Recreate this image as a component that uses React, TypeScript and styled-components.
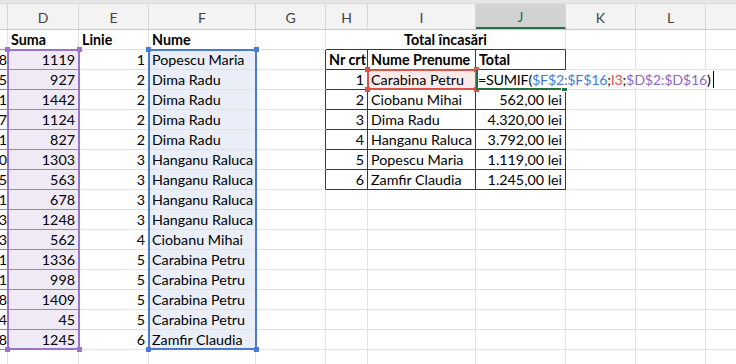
import styled, { createGlobalStyle } from "styled-components";

const GlobalStyle = createGlobalStyle`
  body {
    margin: 0;
    background: #ffffff;
    font-family: "Lato", "Liberation Sans", sans-serif;
  }
`;

interface Col {
  name: string;
  width: number;
}

const columns: Col[] = [
  { name: "", width: 8 },
  { name: "D", width: 71 },
  { name: "E", width: 70 },
  { name: "F", width: 107 },
  { name: "G", width: 70 },
  { name: "H", width: 42 },
  { name: "I", width: 108 },
  { name: "J", width: 90 },
  { name: "K", width: 70 },
  { name: "L", width: 70 },
  { name: "", width: 40 },
];

const cTail = ["8", "5", "1", "7", "1", "0", "5", "1", "3", "3", "1", "1", "8", "4", "8"];
const sums = [1119, 927, 1442, 1124, 827, 1303, 563, 678, 1248, 562, 1336, 998, 1409, 45, 1245];
const lines = [1, 2, 2, 2, 2, 3, 3, 3, 3, 4, 5, 5, 5, 5, 6];
const names = [
  "Popescu Maria",
  "Dima Radu",
  "Dima Radu",
  "Dima Radu",
  "Dima Radu",
  "Hanganu Raluca",
  "Hanganu Raluca",
  "Hanganu Raluca",
  "Hanganu Raluca",
  "Ciobanu Mihai",
  "Carabina Petru",
  "Carabina Petru",
  "Carabina Petru",
  "Carabina Petru",
  "Zamfir Claudia",
];

// rows 4..8 of the summary table (row 3 holds the formula being typed)
const totals = [
  { nr: 2, name: "Ciobanu Mihai", total: "562,00 lei" },
  { nr: 3, name: "Dima Radu", total: "4.320,00 lei" },
  { nr: 4, name: "Hanganu Raluca", total: "3.792,00 lei" },
  { nr: 5, name: "Popescu Maria", total: "1.119,00 lei" },
  { nr: 6, name: "Zamfir Claudia", total: "1.245,00 lei" },
];

const GRID = "#e1e1e1";
const BOX = "#3a3a3a";
const DARK = "#8f8f8f";
const PURPLE = "#9b72cf";
const BLUE = "#4a7bd0";
const RED = "#d9534f";
const PURPLE_FILL = "#efeaf6";
const BLUE_FILL = "#e9eef8";
const RED_FILL = "#fbeaea";

const App = () => {
  const rows = [];
  for (let r = 1; r <= 17; r++) {
    const i = r - 2;
    const data = r >= 2 && r <= 16;
    // G cell draws the left edge of the boxed table on rows 2..8
    const gRight = r >= 2 && r <= 8 ? BOX : GRID;

    let h = null;
    if (r === 1) {
      h = (
        <Cell $w={240} $align="center" $bold $b={BOX}>
          Total încasări
        </Cell>
      );
    } else if (r === 2) {
      h = (
        <>
          <Cell $w={42} $bold $r={BOX} $b={BOX}>Nr crt</Cell>
          <Cell $w={108} $bold $r={BOX} $b={BOX}>Nume Prenume</Cell>
          <Cell $w={90} $bold $r={BOX} $b={BOX}>Total</Cell>
        </>
      );
    } else if (r === 3) {
      h = (
        <>
          <Cell $w={42} $align="right" $r={BOX} $b={BOX}>1</Cell>
          <Cell $w={108} $r={BOX} $b={BOX} $fill={RED_FILL}>Carabina Petru</Cell>
          <ActiveCell $w={90} $r={BOX} $b={BOX}>
            <Formula>
              =SUMIF(<Ref $c={BLUE}>$F$2:$F$16</Ref>;<Ref $c={RED}>I3</Ref>;
              <Ref $c="#9068c4">$D$2:$D$16</Ref>)<Caret />
            </Formula>
          </ActiveCell>
        </>
      );
    } else if (r <= 8) {
      const t = totals[r - 4];
      h = (
        <>
          <Cell $w={42} $align="right" $r={BOX} $b={BOX}>{t.nr}</Cell>
          <Cell $w={108} $r={BOX} $b={BOX}>{t.name}</Cell>
          <Cell $w={90} $align="right" $r={BOX} $b={BOX}>{t.total}</Cell>
        </>
      );
    } else {
      h = (
        <>
          <Cell $w={42} />
          <Cell $w={108} />
          <Cell $w={90} />
        </>
      );
    }

    rows.push(
      <Row key={r}>
        <EdgeCell $w={8} $align="right" $b={data || r === 1 ? DARK : GRID}>
          {data ? cTail[i] : ""}
        </EdgeCell>
        <Cell
          $w={71}
          $align={r === 1 ? "left" : "right"}
          $bold={r === 1}
          $b={data || r === 1 ? DARK : GRID}
          $fill={data ? PURPLE_FILL : undefined}
        >
          {r === 1 ? "Suma" : data ? sums[i] : ""}
        </Cell>
        <Cell $w={70} $align={r === 1 ? "left" : "right"} $bold={r === 1}>
          {r === 1 ? "Linie" : data ? lines[i] : ""}
        </Cell>
        <Cell $w={107} $bold={r === 1} $fill={data ? BLUE_FILL : undefined}>
          {r === 1 ? "Nume" : data ? names[i] : ""}
        </Cell>
        <Cell $w={70} $r={gRight} />
        {h}
        <Cell $w={70} />
        <Cell $w={70} />
        <Cell $w={40} />
      </Row>
    );
  }

  return (
    <>
      <GlobalStyle />
      <Sheet>
        <TopStrip />
        <HeaderRow>
          {columns.map((c, idx) => (
            <ColHeader key={idx} $w={c.width} $active={c.name === "J"}>
              {c.name}
            </ColHeader>
          ))}
        </HeaderRow>
        <Body>
          {rows}
          <Range $x={7} $y={19} $w={73} $h={301} $c={PURPLE}>
            <Handle $c={PURPLE} $pos="tl" />
            <Handle $c={PURPLE} $pos="tr" />
            <Handle $c={PURPLE} $pos="bl" />
            <Handle $c={PURPLE} $pos="br" />
          </Range>
          <Range $x={148} $y={19} $w={109} $h={301} $c={BLUE}>
            <Handle $c={BLUE} $pos="tl" />
            <Handle $c={BLUE} $pos="tr" />
            <Handle $c={BLUE} $pos="bl" />
            <Handle $c={BLUE} $pos="br" />
          </Range>
          <Range $x={367} $y={39} $w={110} $h={21} $c={RED}>
            <Handle $c={RED} $pos="tl" />
            <Handle $c={RED} $pos="tr" />
            <Handle $c={RED} $pos="bl" />
            <Handle $c={RED} $pos="br" />
          </Range>
        </Body>
      </Sheet>
    </>
  );
};

const Sheet = styled.div`
  width: 736px;
  height: 364px;
  overflow: hidden;
  background: #ffffff;
  color: #000000;
`;

const TopStrip = styled.div`
  height: 3px;
  background: #e6e6e6;
  border-bottom: 1px solid #d9d9d9;
`;

const HeaderRow = styled.div`
  display: flex;
  height: 25px;
  background: #f3f3f3;
  border-bottom: 1px solid #c8c8c8;
`;

const ColHeader = styled.div<{ $w: number; $active?: boolean }>`
  flex: none;
  box-sizing: border-box;
  width: ${(p) => p.$w}px;
  display: flex;
  align-items: center;
  justify-content: center;
  padding-top: 2px;
  border-right: 1px solid #d6d6d6;
  font-size: 14px;
  color: ${(p) => (p.$active ? "#217346" : "#444444")};
  background: ${(p) => (p.$active ? "#d2d2d2" : "transparent")};
  border-bottom: ${(p) => (p.$active ? "2px solid #217346" : "none")};
`;

const Body = styled.div`
  position: relative;
`;

const Row = styled.div`
  display: flex;
  height: 20px;
`;

interface CellProps {
  $w: number;
  $align?: "left" | "right" | "center";
  $bold?: boolean;
  $fill?: string;
  $r?: string;
  $b?: string;
}

const Cell = styled.div<CellProps>`
  flex: none;
  box-sizing: border-box;
  width: ${(p) => p.$w}px;
  height: 20px;
  display: flex;
  align-items: center;
  justify-content: ${(p) =>
    p.$align === "right" ? "flex-end" : p.$align === "center" ? "center" : "flex-start"};
  padding: 0 3px;
  border-right: 1px solid ${(p) => p.$r || GRID};
  border-bottom: 1px solid ${(p) => p.$b || GRID};
  background: ${(p) => p.$fill || "transparent"};
  font-size: 14.3px;
  font-weight: ${(p) => (p.$bold ? 700 : 400)};
  white-space: nowrap;
  overflow: hidden;
`;

// the sliver of column C at the left edge
const EdgeCell = styled(Cell)`
  padding: 0;
`;

const ActiveCell = styled(Cell)`
  position: relative;
  overflow: visible;
  z-index: 2;
  border-bottom: 2px solid #217346;
  box-shadow: inset 2px 0 0 #217346;

  &::after {
    content: "";
    position: absolute;
    right: -3px;
    bottom: -4px;
    width: 5px;
    height: 5px;
    background: #217346;
    border: 1px solid #ffffff;
  }
`;

const Formula = styled.div`
  position: absolute;
  left: 2px;
  top: 0;
  height: 18px;
  display: flex;
  align-items: center;
  padding-right: 2px;
  background: #ffffff;
  white-space: pre;
  font-size: 14.3px;
  letter-spacing: -0.25px;
  z-index: 3;
`;

const Ref = styled.span<{ $c: string }>`
  color: ${(p) => p.$c};
`;

const Caret = styled.span`
  display: inline-block;
  width: 1px;
  height: 17px;
  margin-left: 2px;
  background: #000000;
`;

const Range = styled.div<{ $x: number; $y: number; $w: number; $h: number; $c: string }>`
  position: absolute;
  left: ${(p) => p.$x}px;
  top: ${(p) => p.$y}px;
  width: ${(p) => p.$w}px;
  height: ${(p) => p.$h}px;
  box-sizing: border-box;
  border: 2px solid ${(p) => p.$c};
  pointer-events: none;
  z-index: 1;
`;

const Handle = styled.span<{ $c: string; $pos: "tl" | "tr" | "bl" | "br" }>`
  position: absolute;
  width: 5px;
  height: 5px;
  background: ${(p) => p.$c};
  ${(p) => (p.$pos[0] === "t" ? "top: -4px;" : "bottom: -4px;")}
  ${(p) => (p.$pos[1] === "l" ? "left: -4px;" : "right: -4px;")}
`;

export default App;
